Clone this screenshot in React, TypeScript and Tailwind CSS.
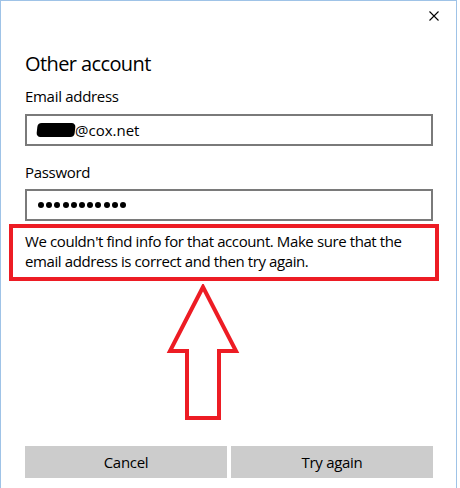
import React from 'react';

const font = { fontFamily: '"Open Sans", "Noto Sans", Arial, sans-serif' };

export default function App() {
  return (
    <div className="w-[460px] h-[488px] bg-white" style={font}>
      <div className="w-[457px] h-[488px] border-t border-x border-[#9fc3e7] flex flex-col text-black">
        {/* Title bar */}
        <div className="flex justify-end pt-[10px] pr-[17px]">
          <svg width="10" height="10" viewBox="0 0 10 10" className="block">
            <path d="M0.5 0.5 L9.5 9.5 M9.5 0.5 L0.5 9.5" stroke="#000" strokeWidth="1.1" fill="none" />
          </svg>
        </div>

        <div className="flex flex-col flex-1 pl-[24px] pr-[23px] pb-[10px]">
          <h1 className="text-[20px] leading-[28px] mt-[29px] tracking-[-0.6px]">Other account</h1>

          <label className="text-[15px] leading-[20px] mt-[8px] tracking-[-0.3px]">Email address</label>
          <div className="mt-[8px] h-[32px] border-2 border-[#7a7a7a] flex items-center pl-[10px] text-[15px]">
            <span className="inline-block w-[38px] h-[14px] bg-black rounded-[4px] -skew-x-6"></span>
            <span>@cox.net</span>
          </div>

          <label className="text-[15px] leading-[20px] mt-[16px] tracking-[-0.3px]">Password</label>
          <div className="mt-[7px] h-[32px] border-2 border-[#7a7a7a] flex items-center pl-[11px] gap-[2.2px]">
            {Array.from({ length: 11 }).map((_, i) => (
              <span key={i} className="w-[6px] h-[6px] rounded-full bg-black"></span>
            ))}
          </div>

          {/* Error message, highlighted */}
          <div className="mt-[3px] -ml-[16px] -mr-[6px] border-4 border-[#ed1c24] pl-[12px] pt-[3px] pb-[6px] text-[15px] leading-[20px] tracking-[-0.4px]">
            We couldn't find info for that account. Make sure that the<br />
            email address is correct and then try again.
          </div>

          {/* Arrow annotation */}
          <svg width="74" height="138" viewBox="0 0 74 138" className="block ml-[141px] mt-[3px]">
            <path
              d="M37 3 L4 67 L21 67 L21 134 L53 134 L53 67 L70 67 Z"
              fill="none"
              stroke="#ed1c24"
              strokeWidth="4"
              strokeLinejoin="miter"
            />
          </svg>

          <div className="mt-auto grid grid-cols-2 gap-[4px]">
            <button className="h-[32px] bg-[#cccccc] text-[15px] tracking-[-0.3px]">Cancel</button>
            <button className="h-[32px] bg-[#cccccc] text-[15px] tracking-[-0.3px]">Try again</button>
          </div>
        </div>
      </div>
    </div>
  );
}
